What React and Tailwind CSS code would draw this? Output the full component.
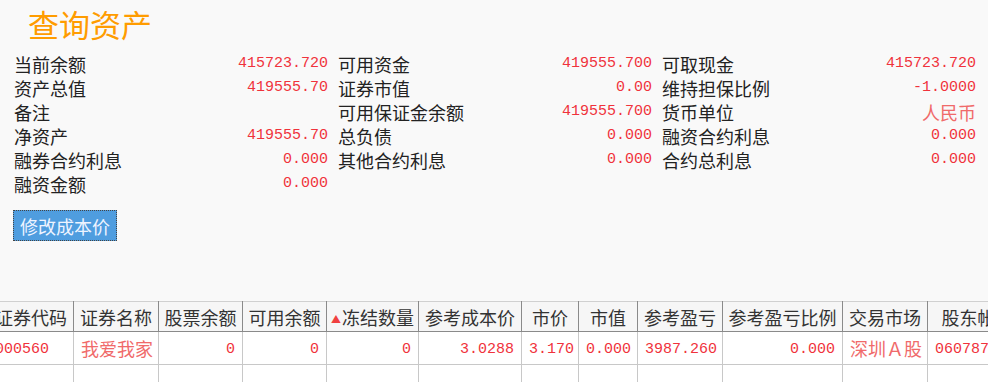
const info = [
  ["当前余额", "415723.720", "可用资金", "419555.700", "可取现金", "415723.720"],
  ["资产总值", "419555.70", "证券市值", "0.00", "维持担保比例", "-1.0000"],
  ["备注", "", "可用保证金余额", "419555.700", "货币单位", "人民币"],
  ["净资产", "419555.70", "总负债", "0.000", "融资合约利息", "0.000"],
  ["融券合约利息", "0.000", "其他合约利息", "0.000", "合约总利息", "0.000"],
  ["融资金额", "0.000"],
];

const cols = [
  { title: "证券代码", w: 85 },
  { title: "证券名称", w: 85 },
  { title: "股票余额", w: 84 },
  { title: "可用余额", w: 84 },
  { title: "冻结数量", w: 92, sorted: true },
  { title: "参考成本价", w: 103 },
  { title: "市价", w: 57 },
  { title: "市值", w: 59 },
  { title: "参考盈亏", w: 85 },
  { title: "参考盈亏比例", w: 120 },
  { title: "交易市场", w: 85 },
  { title: "股东帐号", w: 100 },
];

const row = [
  { v: "000560", align: "left" },
  { v: "我爱我家", align: "left" },
  { v: "0", align: "right" },
  { v: "0", align: "right" },
  { v: "0", align: "right" },
  { v: "3.0288", align: "right" },
  { v: "3.170", align: "right" },
  { v: "0.000", align: "right" },
  { v: "3987.260", align: "right" },
  { v: "0.000", align: "right" },
  { v: "深圳Ａ股", align: "left" },
  { v: "0607874413", align: "left" },
];

const cjk = { fontFamily: '"Noto Sans CJK SC", "Liberation Sans", sans-serif' };
const mono = { fontFamily: '"Liberation Mono", "Noto Sans CJK SC", monospace' };

function Value({ text }) {
  const isCn = /[\u4e00-\u9fa5]/.test(text);
  return (
    <span
      className={
        "whitespace-nowrap " +
        (isCn ? "text-[18px] text-[#f06a6a]" : "text-[15px] text-[#f0323c]")
      }
      style={isCn ? cjk : mono}
    >
      {text}
    </span>
  );
}

export default function App() {
  return (
    <div className="h-[382px] w-[988px] overflow-hidden bg-[#f9f9f9] text-[#222]" style={cjk}>
      <div className="flex h-[46px] items-center pl-[28px] text-[31px] leading-none text-[#ff9c00]">
        查询资产
      </div>

      <div className="mt-[6px] grid grid-cols-[314px_314px_314px] gap-x-[10px] pl-[14px]">
        {info.map((r, i) =>
          [0, 2, 4].map((k) =>
            r[k] ? (
              <div key={i + "-" + k} className="flex h-6 items-center justify-between">
                <span className="text-[18px] leading-none">{r[k]}</span>
                <Value text={r[k + 1]} />
              </div>
            ) : (
              <div key={i + "-" + k} className="h-6" />
            )
          )
        )}
      </div>

      <div className="mt-[14px] pl-[13px]">
        <button className="h-[31px] w-[104px] border border-dotted border-[#444] bg-[#4f9ddf] text-[18px] leading-none text-[#eef4ff]">
          修改成本价
        </button>
      </div>

      <div className="mt-[60px] ml-[-12px]">
        <table className="table-fixed border-collapse" style={{ width: 1039 }}>
          <colgroup>
            {cols.map((c) => (
              <col key={c.title} style={{ width: c.w }} />
            ))}
          </colgroup>
          <thead>
            <tr className="h-[30px] border-t border-b border-t-[#d0d0d0] border-b-[#8a8a8a] bg-[#f6f6f6]">
              {cols.map((c) => (
                <th
                  key={c.title}
                  className="overflow-hidden whitespace-nowrap border-x border-x-[#8a8a8a] p-0 text-center text-[18px] font-normal leading-none text-[#333]"
                >
                  {c.sorted && <span className="mr-[1px] align-[2px] text-[10px] text-[#f04040]">▲</span>}
                  {c.title}
                </th>
              ))}
            </tr>
          </thead>
          <tbody className="bg-white">
            <tr className="h-[33px] border-b border-[#c8c8c8]">
              {row.map((c, i) => (
                <td
                  key={i}
                  className={
                    "overflow-hidden whitespace-nowrap border-x border-[#c8c8c8] py-0 " +
                    (i === 0 ? "pl-[6px] " : "px-[7px] ") +
                    (c.align === "right" ? "text-right" : "text-left")
                  }
                >
                  <Value text={c.v} />
                </td>
              ))}
            </tr>
            <tr className="h-[33px]">
              {row.map((c, i) => (
                <td key={i} className="border-x border-[#c8c8c8]" />
              ))}
            </tr>
          </tbody>
        </table>
      </div>
    </div>
  );
}
